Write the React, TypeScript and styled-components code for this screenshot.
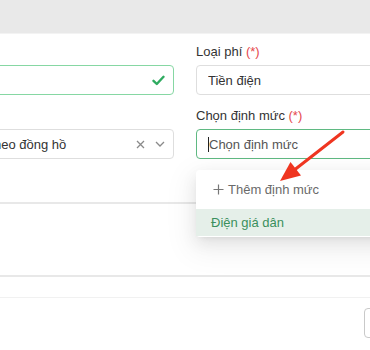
import React from 'react'
import styled, { createGlobalStyle } from 'styled-components'

const GlobalStyle = createGlobalStyle`
  html, body {
    margin: 0;
    padding: 0;
    background: #fff;
    overflow: hidden;
  }
  body {
    width: 370px;
    height: 350px;
    font-family: 'Liberation Sans', Arial, sans-serif;
    color: #333;
  }
`

const Page = styled.div`
  position: relative;
  width: 370px;
  height: 350px;
  overflow: hidden;
`

const TopBar = styled.div`
  height: 33px;
  background: #e9e9e9;
  border-bottom: 1px solid #f3f3f3;
`

const FormGrid = styled.div`
  display: grid;
  grid-template-columns: 200px 230px;
  column-gap: 22px;
  row-gap: 12px;
  margin-left: -26px;
  padding-top: 9px;
`

const Field = styled.div`
  position: relative;
  display: flex;
  flex-direction: column;
`

const Label = styled.div`
  height: 18px;
  line-height: 18px;
  font-size: 13px;
  color: #333;
  margin-bottom: 4px;
`

const Required = styled.span`
  color: #e5484d;
`

const Control = styled.div<{ $tone?: 'ok' | 'focus' | 'plain' }>`
  box-sizing: border-box;
  height: 30px;
  display: flex;
  align-items: center;
  gap: 10px;
  padding: 0 8px 0 11px;
  border-radius: 4px;
  background: #fff;
  font-size: 13px;
  color: #333;
  border: 1px solid
    ${({ $tone }) =>
      $tone === 'ok' ? '#86d7a3' : $tone === 'focus' ? '#5fb982' : '#dedede'};
`

const Value = styled.span`
  flex: 1;
  white-space: nowrap;
  overflow: hidden;
`

const Placeholder = styled(Value)`
  color: #555;
  display: flex;
  align-items: center;
`

const Caret = styled.i`
  display: inline-block;
  width: 1px;
  height: 15px;
  background: #222;
`

const Icon = styled.span`
  display: flex;
  align-items: center;
  color: #8a8a8a;
`

const Divider = styled.div<{ $light?: boolean }>`
  height: ${({ $light }) => ($light ? 1 : 2)}px;
  background: ${({ $light }) => ($light ? '#f1f1f1' : '#e8e8e8')};
`

const Section = styled.div<{ $h: number }>`
  height: ${({ $h }) => $h}px;
`

const Footer = styled.div`
  display: flex;
  justify-content: flex-end;
  margin-right: -70px;
  padding-top: 10px;
`

const Button = styled.button`
  width: 76px;
  height: 30px;
  border: 1px solid #c9c9c9;
  border-radius: 4px;
  background: #fff;
`

const Dropdown = styled.div`
  position: absolute;
  top: 63px;
  left: 0;
  width: 240px;
  background: #fff;
  border-radius: 4px;
  padding-bottom: 1px;
  box-shadow: 0 3px 6px -4px rgba(0, 0, 0, 0.12), 0 6px 16px 0 rgba(0, 0, 0, 0.08),
    0 9px 28px 8px rgba(0, 0, 0, 0.05);
  z-index: 2;
`

const AddItem = styled.div`
  height: 39px;
  display: flex;
  align-items: center;
  gap: 4px;
  padding-left: 17px;
  font-size: 13px;
  color: #6a6a6a;
`

const Option = styled.div<{ $active?: boolean }>`
  height: 27px;
  display: flex;
  align-items: center;
  padding-left: 15px;
  font-size: 13px;
  color: ${({ $active }) => ($active ? '#3b8f5d' : '#333')};
  background: ${({ $active }) => ($active ? '#e5efe9' : 'transparent')};
`

const Arrow = styled.svg`
  position: absolute;
  left: 0;
  top: 0;
  pointer-events: none;
  z-index: 3;
`

const Check = () => (
  <svg width="13" height="11" viewBox="0 0 13 11">
    <path d="M1.5 5.8 L4.8 9 L11.5 1.8" fill="none" stroke="#2fab60" strokeWidth="2.4" strokeLinecap="round" strokeLinejoin="round" />
  </svg>
)

const Close = () => (
  <svg width="9" height="9" viewBox="0 0 9 9">
    <path d="M1 1 L8 8 M8 1 L1 8" stroke="#8a8a8a" strokeWidth="1.3" />
  </svg>
)

const Chevron = () => (
  <svg width="10" height="6" viewBox="0 0 10 6">
    <path d="M1 1 L5 5 L9 1" fill="none" stroke="#8a8a8a" strokeWidth="1.3" />
  </svg>
)

const Plus = () => (
  <svg width="11" height="11" viewBox="0 0 11 11">
    <path d="M5.5 0.5 V10.5 M0.5 5.5 H10.5" stroke="#777" strokeWidth="1.2" />
  </svg>
)

export default function App() {
  return (
    <Page>
      <GlobalStyle />
      <TopBar />
      <FormGrid>
        <Field>
          <Label />
          <Control $tone="ok">
            <Value />
            <Icon><Check /></Icon>
          </Control>
        </Field>
        <Field>
          <Label>
            Loại phí <Required>(*)</Required>
          </Label>
          <Control>
            <Value>Tiền điện</Value>
          </Control>
        </Field>
        <Field>
          <Label />
          <Control>
            <Value>Theo đồng hồ</Value>
            <Icon><Close /></Icon>
            <Icon><Chevron /></Icon>
          </Control>
        </Field>
        <Field>
          <Label>
            Chọn định mức <Required>(*)</Required>
          </Label>
          <Control $tone="focus">
            <Placeholder>
              <Caret />
              Chọn định mức
            </Placeholder>
          </Control>
          <Dropdown>
            <AddItem>
              <Plus /> Thêm định mức
            </AddItem>
            <Option $active>Điện giá dân</Option>
          </Dropdown>
        </Field>
      </FormGrid>
      <Section $h={43} />
      <Divider />
      <Section $h={71} />
      <Divider />
      <Section $h={20} />
      <Divider $light />
      <Footer>
        <Button />
      </Footer>
      <Arrow width="370" height="350" viewBox="0 0 370 350">
        <line x1="343" y1="132" x2="293" y2="171" stroke="#ef3520" strokeWidth="3" strokeLinecap="round" />
        <polygon points="280,181 290.5,162 301,175.5" fill="#ef3520" />
      </Arrow>
    </Page>
  )
}
